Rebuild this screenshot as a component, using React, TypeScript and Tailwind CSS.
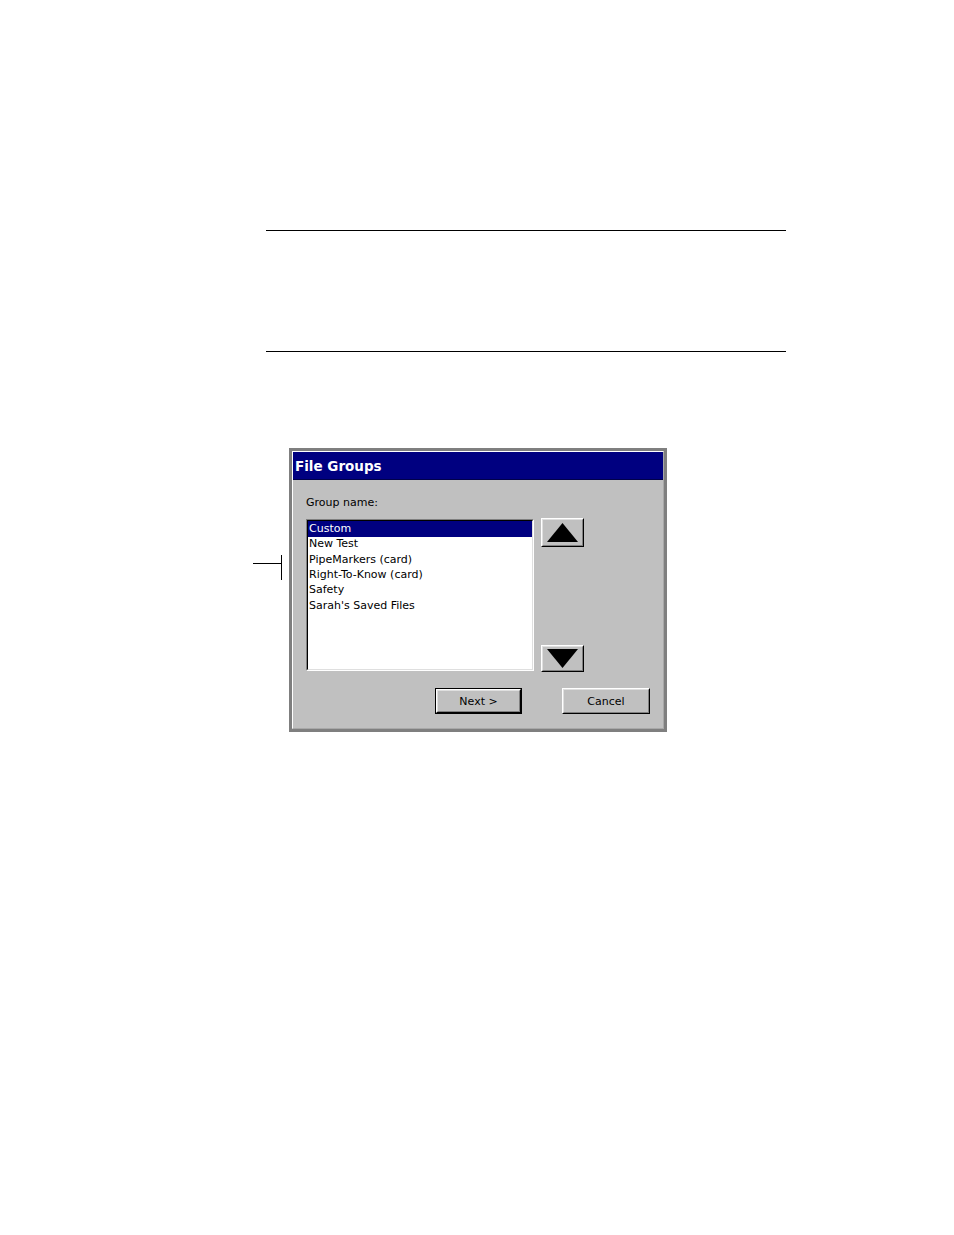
import React from "react";

const items = [
  "Custom",
  "New Test",
  "PipeMarkers (card)",
  "Right-To-Know (card)",
  "Safety",
  "Sarah's Saved Files",
];

function RaisedButton({
  children,
  className = "",
}: {
  children: React.ReactNode;
  className?: string;
}) {
  return (
    <div
      className={
        "border border-t-white border-l-white border-r-black border-b-black bg-[#c0c0c0] " +
        className
      }
    >
      <div className="w-full h-full border border-t-[#dfdfdf] border-l-[#dfdfdf] border-r-[#808080] border-b-[#808080] flex items-center justify-center">
        {children}
      </div>
    </div>
  );
}

export default function App() {
  return (
    <div
      className="relative w-[954px] h-[1235px] bg-white"
      style={{ fontFamily: '"DejaVu Sans", Verdana, sans-serif' }}
    >
      <div className="pt-[230px] pl-[266px]">
        <div className="w-[520px] h-[1px] bg-black" />
        <div className="w-[520px] h-[120px]" />
        <div className="w-[520px] h-[1px] bg-black" />
      </div>

      <div className="relative ml-[289px] mt-[96px] w-[378px] h-[284px] border-[3px] border-[#7f7f7f] bg-[#c0c0c0]">
        {/* callout */}
        <div className="absolute left-[-39px] top-[112px] w-[29px] h-[1px] bg-black" />
        <div className="absolute left-[-11px] top-[104px] w-[1px] h-[25px] bg-black" />

        <div className="w-full h-full border border-t-white border-l-white border-r-[#a8a8a8] border-b-[#a8a8a8] flex flex-col">
          <div className="h-[28px] bg-[#000080] flex items-center pl-[2px] pt-[3px] border-b border-b-[#00004a]">
            <span className="text-white font-bold text-[13.5px] leading-none">
              File Groups
            </span>
          </div>

          <div className="pl-[13px] pt-[16px]">
            <div className="text-[11px] leading-[14px] text-black">Group name:</div>

            <div className="flex items-start gap-[7px] mt-[8px]">
              <div className="mt-[1px] w-[228px] h-[152px] border border-t-[#808080] border-l-[#808080] border-r-white border-b-white">
                <div className="w-full h-full bg-white border border-t-black border-l-black border-r-[#dfdfdf] border-b-[#dfdfdf]">
                  {items.map((it, i) => (
                    <div
                      key={it}
                      className={
                        "pl-[1px] text-[11px] whitespace-nowrap flex items-center " +
                        (i === 0
                          ? "h-[16px] bg-[#000080] text-white"
                          : "h-[15.3px] text-black")
                      }
                    >
                      {it}
                    </div>
                  ))}
                </div>
              </div>

              <div className="flex flex-col justify-between h-[154px]">
                <RaisedButton className="w-[43px] h-[29px]">
                  <svg width="33" height="21" viewBox="0 0 33 21">
                    <polygon points="1,20 32,20 16.5,1" fill="black" />
                  </svg>
                </RaisedButton>
                <RaisedButton className="w-[43px] h-[27px]">
                  <svg width="33" height="19" viewBox="0 0 33 19">
                    <polygon points="1,0 32,0 16.5,19" fill="black" />
                  </svg>
                </RaisedButton>
              </div>
            </div>
          </div>

          <div className="flex justify-end gap-[40px] pr-[13px] mt-[16px]">
            <div className="w-[87px] h-[26px] border border-black">
              <RaisedButton className="w-full h-full">
                <span className="text-[11px] text-black pt-[2px]">Next &gt;</span>
              </RaisedButton>
            </div>
            <RaisedButton className="w-[88px] h-[26px]">
              <span className="text-[11px] text-black pt-[2px]">Cancel</span>
            </RaisedButton>
          </div>
        </div>
      </div>
    </div>
  );
}
